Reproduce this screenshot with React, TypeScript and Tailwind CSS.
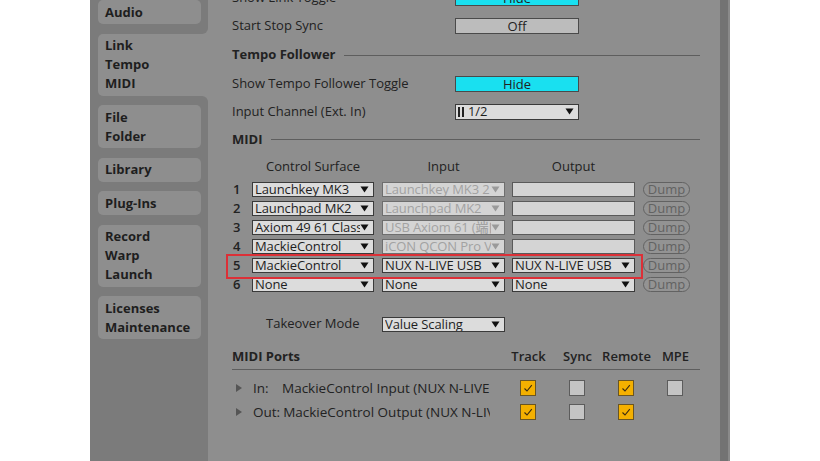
import React from "react";

const FONT = "font-['Open_Sans','Noto_Sans_CJK_SC',sans-serif]";

function Arrow({ color = "#111" }: { color?: string }) {
  return (
    <svg width="9" height="7" viewBox="0 0 9 7" className="shrink-0">
      <path d="M0.5 0.5 L8.5 0.5 L4.5 6.5 Z" fill={color} />
    </svg>
  );
}

function Dropdown({
  text,
  w,
  disabled = false,
  icon = false,
}: {
  text: string;
  w: string;
  disabled?: boolean;
  icon?: boolean;
}) {
  return (
    <div
      className={`${w} h-[15px] border flex items-center pl-[2px] pr-[4px] ${
        disabled ? "border-[#6e6e6e] bg-[#d4d4d4] text-[#a2a2a2]" : "border-[#3a3a3a] bg-[#dcdcdc] text-[#1e1e1e]"
      }`}
    >
      {icon && (
        <span className="flex gap-[2px] mr-[4px] h-[10px]">
          <span className="w-[2px] h-full bg-[#222]" />
          <span className="w-[2px] h-full bg-[#222]" />
        </span>
      )}
      <span className="flex-1 overflow-hidden whitespace-nowrap text-[13px] leading-[13px] font-medium tracking-[-0.1px]">{text}</span>
      <Arrow color={disabled ? "#9a9a9a" : "#111"} />
    </div>
  );
}

function Heading({ text, className = "" }: { text: string; className?: string }) {
  return (
    <div className={`flex items-center ${className}`}>
      <span className="text-[13px] font-bold text-[#222] whitespace-nowrap">{text}</span>
      <span className="flex-1 h-px bg-[#5e5e5e] ml-[8px]" />
    </div>
  );
}

function SettingRow({ label, children, h = "h-[28px]" }: { label: string; children: React.ReactNode; h?: string }) {
  return (
    <div className={`flex items-center ${h}`}>
      <span className="w-[223px] text-[13px] font-medium text-[#222] whitespace-nowrap">{label}</span>
      {children}
    </div>
  );
}

function ToggleBtn({ text, on }: { text: string; on: boolean }) {
  return (
    <div
      className={`w-[124px] h-[16px] border border-[#4a4a4a] flex items-center justify-center text-[13px] leading-[13px] font-medium text-[#222] ${
        on ? "bg-[#19e0f0]" : "bg-[#bcbcbc]"
      }`}
    >
      {text}
    </div>
  );
}

function Dump() {
  return (
    <div className="w-[47px] h-[15px] rounded-full border border-[#626262] bg-[#939393] flex items-center justify-center text-[13px] leading-[13px] text-[#626262] font-medium">
      Dump
    </div>
  );
}

function Check({ on }: { on: boolean }) {
  return (
    <div
      className={`w-[16px] h-[16px] border flex items-center justify-center ${
        on ? "bg-[#f4b000] border-[#6a5522]" : "bg-[#c4c4c4] border-[#5c5c5c]"
      }`}
    >
      {on && (
        <svg width="10" height="8" viewBox="0 0 10 8">
          <path d="M1.5 4.5 L4 7 L8.8 1.2" fill="none" stroke="#3a2a10" strokeWidth="1.1" />
        </svg>
      )}
    </div>
  );
}

function Tab({ lines, selected = false }: { lines: string[]; selected?: boolean }) {
  return (
    <div
      className={`relative bg-[#8e8e8e] px-[7px] py-[2.5px] ${
        selected ? "w-[110px] rounded-l-[5px]" : "w-[103px] rounded-[5px]"
      }`}
    >
      {lines.map((l) => (
        <div key={l} className="text-[13px] leading-[19px] font-bold text-[#1e1e1e] whitespace-nowrap">
          {l}
        </div>
      ))}
      {selected && (
        <>
          <div className="absolute right-0 top-[-7px] w-[7px] h-[7px] bg-[#8e8e8e]">
            <div className="w-full h-full bg-[#7b7b7b] rounded-br-[6px]" />
          </div>
          <div className="absolute right-0 bottom-[-7px] w-[7px] h-[7px] bg-[#8e8e8e]">
            <div className="w-full h-full bg-[#7b7b7b] rounded-tr-[6px]" />
          </div>
        </>
      )}
    </div>
  );
}

const rows = [
  { n: "1", cs: "Launchkey MK3", inp: "Launchkey MK3 2", inDis: true, out: "" },
  { n: "2", cs: "Launchpad MK2", inp: "Launchpad MK2", inDis: true, out: "" },
  { n: "3", cs: "Axiom 49 61 Classic", inp: "USB Axiom 61 (端口 1)", inDis: true, out: "" },
  { n: "4", cs: "MackieControl", inp: "iCON QCON Pro V", inDis: true, out: "" },
  { n: "5", cs: "MackieControl", inp: "NUX N-LIVE USB", inDis: false, out: "NUX N-LIVE USB" },
  { n: "6", cs: "None", inp: "None", inDis: false, out: "None" },
];

export default function App() {
  return (
    <div className={`w-[820px] h-[461px] overflow-hidden flex bg-white ${FONT}`}>
      <div className="w-[90px] shrink-0 bg-white" />
      {/* Sidebar */}
      <div className="w-[118px] shrink-0 bg-[#7b7b7b] flex flex-col gap-[9.5px] pl-[8px]">
        <Tab lines={["Audio"]} />
        <Tab lines={["Link", "Tempo", "MIDI"]} selected />
        <Tab lines={["File", "Folder"]} />
        <Tab lines={["Library"]} />
        <Tab lines={["Plug-Ins"]} />
        <Tab lines={["Record", "Warp", "Launch"]} />
        <Tab lines={["Licenses", "Maintenance"]} />
      </div>
      {/* Main */}
      <div className="w-[512px] shrink-0 bg-[#8e8e8e] pl-[24px] pr-[20px] flex flex-col overflow-hidden">
        <div className="mt-[-16px]" />
        <SettingRow label="Show Link Toggle">
          <ToggleBtn text="Hide" on />
        </SettingRow>
        <SettingRow label="Start Stop Sync">
          <ToggleBtn text="Off" on={false} />
        </SettingRow>
        <Heading text="Tempo Follower" className="h-[30px]" />
        <SettingRow label="Show Tempo Follower Toggle">
          <ToggleBtn text="Hide" on />
        </SettingRow>
        <SettingRow label="Input Channel (Ext. In)" h="h-[27px]">
          <Dropdown text="1/2" w="w-[124px] h-[16px]" icon />
        </SettingRow>
        <Heading text="MIDI" className="h-[29px]" />

        {/* Column headers */}
        <div className="flex items-center h-[26px] text-[13px] font-medium text-[#222]">
          <span className="w-[20px]" />
          <span className="w-[122px] text-center">Control Surface</span>
          <span className="w-[123px] ml-[8px] text-center">Input</span>
          <span className="w-[123px] ml-[7px] text-center">Output</span>
        </div>

        <div className="relative flex flex-col">
          {rows.map((r) => (
            <div key={r.n} className="flex items-center h-[19px]">
              <span className="w-[20px] pl-[1px] text-[13px] font-semibold text-[#222]">{r.n}</span>
              <Dropdown text={r.cs} w="w-[122px]" />
              <div className="ml-[8px]">
                <Dropdown text={r.inp} w="w-[123px]" disabled={r.inDis} />
              </div>
              <div className="ml-[7px]">
                {r.out ? (
                  <Dropdown text={r.out} w="w-[123px]" />
                ) : (
                  <div className="w-[123px] h-[15px] border border-[#5a5a5a] bg-[#d4d4d4]" />
                )}
              </div>
              <div className="ml-[8px]">
                <Dump />
              </div>
            </div>
          ))}
          <div className="absolute left-[-6px] top-[74px] w-[417px] h-[25px] border-2 border-[#dc3037]" />
        </div>

        <div className="flex items-center h-[20px] mt-[20px]">
          <span className="w-[150px] pl-[34px] text-[13px] font-medium text-[#222] whitespace-nowrap">Takeover Mode</span>
          <Dropdown text="Value Scaling" w="w-[123px]" />
        </div>

        <div className="flex items-center h-[26px] mt-[10px] border-b border-[#5e5e5e]">
          <span className="w-[272px] text-[13px] font-bold text-[#222]">MIDI Ports</span>
          {["Track", "Sync", "Remote", "MPE"].map((c) => (
            <span key={c} className="w-[49px] text-center text-[13px] font-semibold text-[#222]">
              {c}
            </span>
          ))}
        </div>

        {[
          { k: "In:", name: "MackieControl Input (NUX N-LIVE USB)", checks: [true, false, true, false] as (boolean | null)[] },
          { k: "Out:", name: "MackieControl Output (NUX N-LIVE USB)", checks: [true, false, true, null] as (boolean | null)[] },
        ].map((p, i) => (
          <div key={p.k} className={`flex items-center h-[24px] ${i === 0 ? "mt-[6px]" : ""}`}>
            <svg width="6" height="8" viewBox="0 0 6 8" className="ml-[4px] shrink-0">
              <path d="M0 0 L6 4 L0 8 Z" fill="#555" />
            </svg>
            <div className="ml-[11px] w-[237px] overflow-hidden whitespace-nowrap flex text-[13.5px] font-medium text-[#222]">
              {p.k === "In:" ? (
                <span className="w-[29px] shrink-0">In:</span>
              ) : (
                <span className="shrink-0 mr-[3px]">Out:</span>
              )}
              <span>{p.name}</span>
            </div>
            <span className="w-[14px]" />
            {p.checks.map((c, j) => (
              <div key={j} className="w-[49px] flex justify-center pr-[2px]">
                {c !== null && <Check on={c} />}
              </div>
            ))}
          </div>
        ))}
      </div>
      <div className="w-[10px] shrink-0 bg-[#737373] border-r-2 border-[#8a8a8a]" />
      <div className="flex-1 bg-white" />
    </div>
  );
}
